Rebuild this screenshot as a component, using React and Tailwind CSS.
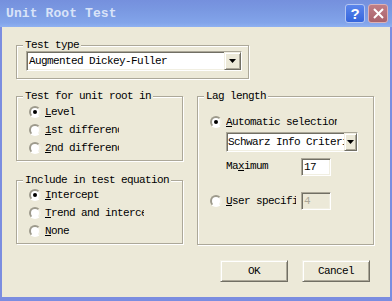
import React from 'react';

const mono = "font-['Liberation_Mono',monospace] text-[11px] leading-[12px] tracking-[-0.6px] text-black";
const sunken = "border border-t-[#aca899] border-l-[#aca899] border-b-white border-r-white shadow-[inset_1px_1px_0_#716f64,inset_-1px_-1px_0_#f1efe2]";
const raised = "border border-t-[#f1efe2] border-l-[#f1efe2] border-b-[#716f64] border-r-[#716f64] shadow-[inset_1px_1px_0_#fff,inset_-1px_-1px_0_#aca899] bg-[#ece9d8]";

const Radio = ({ checked }) => (
  <div className="w-[12px] h-[12px] shrink-0 rounded-full border-2 border-t-[#9d9a8c] border-l-[#9d9a8c] border-b-white border-r-[#f1efe2] bg-white flex items-center justify-center">
    {checked && <div className="w-[4px] h-[4px] rounded-full bg-black" />}
  </div>
);

const Arrow = () => (
  <svg width="7" height="4" viewBox="0 0 7 4">
    <path d="M0 0h7L3.5 4z" fill="#000" />
  </svg>
);

const Group = ({ label, className, children }) => (
  <div className={"relative border border-[#aca899] shadow-[inset_1px_1px_0_#fff,1px_1px_0_#fff] " + className}>
    <span className={"absolute -top-[7px] left-[6px] px-[2px] bg-[#ece9d8] whitespace-nowrap " + mono}>{label}</span>
    {children}
  </div>
);

const Option = ({ checked, width, children }) => (
  <div className="h-[18px] flex items-center gap-[4px]">
    <Radio checked={checked} />
    <span className={"overflow-hidden whitespace-nowrap " + width + " " + mono}>{children}</span>
  </div>
);

export default function App() {
  return (
    <div className="w-[392px] h-[301px] flex flex-col bg-[#ece9d8] overflow-hidden">
      {/* title bar */}
      <div className="h-[27px] shrink-0 flex items-center bg-[linear-gradient(to_bottom,#7590dd,#7a99e2_40%,#82a4ea_85%,#8fb1f1)]">
        <span className="pl-[6px] font-['Liberation_Mono',monospace] text-[13px] font-bold text-[#d9e3f8] tracking-[0.1px]">Unit Root Test</span>
        <div className="ml-auto mr-[4px] flex gap-[3px]">
          <div className="w-[20px] h-[19px] rounded-[3px] border border-[#b4c6f2] bg-[linear-gradient(to_bottom,#5b86ec,#3565dc)] flex items-center justify-center">
            <span className="font-['Liberation_Sans',sans-serif] text-[15px] font-bold leading-none text-white">?</span>
          </div>
          <div className="w-[20px] h-[19px] rounded-[3px] border border-[#dcb0b4] bg-[linear-gradient(to_bottom,#c07e86,#a9626b)] flex items-center justify-center">
            <svg width="11" height="11" viewBox="0 0 11 11">
              <path d="M1 1L10 10M10 1L1 10" stroke="#fff" strokeWidth="2" />
            </svg>
          </div>
        </div>
      </div>

      {/* body */}
      <div className="flex-1 border-l-2 border-r-2 border-b-4 border-[#7b8de0] pt-[18px] pl-[14px]">
        <Group label="Test type" className="w-[233px] h-[34px] pl-[9px] pt-[5px]">
          <div className={"w-[216px] h-[20px] flex bg-white " + sunken}>
            <div className={"flex-1 pl-[2px] flex items-center " + mono}>Augmented Dickey-Fuller</div>
            <div className={"w-[17px] h-full flex items-center justify-center " + raised}>
              <Arrow />
            </div>
          </div>
        </Group>

        <div className="mt-[17px] flex gap-[14px]">
          <div className="w-[167px] flex flex-col">
            <Group label="Test for unit root in" className="h-[65px] pl-[12px] pt-[6px]">
              <Option checked width="w-[74px]"><u>L</u>evel</Option>
              <Option width="w-[74px]"><u>1</u>st difference</Option>
              <Option width="w-[74px]"><u>2</u>nd difference</Option>
            </Group>
            <Group label="Include in test equation" className="mt-[19px] h-[64px] pl-[12px] pt-[5px]">
              <Option checked width="w-[99px]"><u>I</u>ntercept</Option>
              <Option width="w-[99px]"><u>T</u>rend and intercept</Option>
              <Option width="w-[99px]"><u>N</u>one</Option>
            </Group>
          </div>

          <Group label="Lag length" className="w-[177px] h-[149px] pl-[12px] pt-[16px]">
            <Option checked width="w-[111px]"><u>A</u>utomatic selection</Option>
            <div className={"mt-[1px] ml-[16px] w-[132px] h-[20px] flex bg-white " + sunken}>
              <div className={"flex-1 pl-[1px] overflow-hidden whitespace-nowrap flex items-center " + mono}>Schwarz Info Criterion</div>
              <div className={"w-[13px] h-full flex items-center justify-center " + raised}>
                <Arrow />
              </div>
            </div>
            <div className="mt-[6px] ml-[16px] flex items-center">
              <span className={"w-[75px] pb-[3px] " + mono}>Ma<u>x</u>imum</span>
              <div className={"w-[30px] h-[18px] bg-white pl-[2px] flex items-center " + sunken + " " + mono}>17</div>
            </div>
            <div className="mt-[16px] flex items-center gap-[4px]">
              <Radio />
              <span className={"w-[70px] overflow-hidden whitespace-nowrap " + mono}><u>U</u>ser specified</span>
              <div className={"ml-[1px] w-[30px] h-[18px] bg-[#ece9d8] pl-[2px] flex items-center " + sunken + " " + mono}>
                <span className="text-[#aca899]">4</span>
              </div>
            </div>
          </Group>
        </div>

        <div className="mt-[15px] ml-[204px] flex gap-[14px]">
          <div className={"w-[68px] h-[22px] flex items-center justify-center " + raised + " " + mono}>OK</div>
          <div className={"w-[68px] h-[22px] flex items-center justify-center " + raised + " " + mono}>Cancel</div>
        </div>
      </div>
    </div>
  );
}
